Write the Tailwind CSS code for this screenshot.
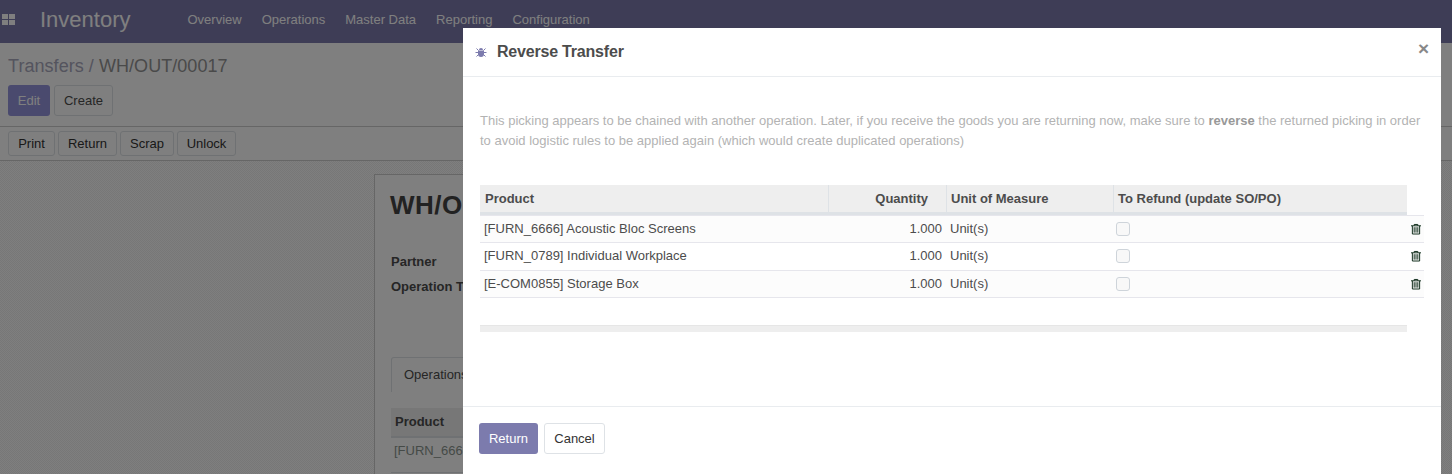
<!DOCTYPE html>
<html lang="en">
<head>
  <meta charset="UTF-8" />
  <title>Transfers | Inventory</title>
  <script src="https://cdn.jsdelivr.net/npm/@tailwindcss/browser@4"></script>
</head>
<body class="relative h-[474px] overflow-hidden bg-white font-['Liberation_Sans',Arial,sans-serif] text-[13px] text-[#4c4c4c]">

  <!-- page behind the dialog -->
  <nav class="flex h-[43px] items-center bg-[#7c7bad] pb-[4px] text-white">
    <svg class="ml-[2px] h-[11px] w-[13px]" viewBox="0 0 13 11" fill="#fff"><rect width="6" height="5"/><rect x="7" width="6" height="5"/><rect y="6" width="6" height="5"/><rect x="7" y="6" width="6" height="5"/></svg>
    <span class="ml-[25px] text-[22px]">Inventory</span>
    <div class="ml-[57px] flex gap-[20px]">
      <a>Overview</a><a>Operations</a><a>Master Data</a><a>Reporting</a><a>Configuration</a>
    </div>
  </nav>

  <div class="h-[84px] border-b border-[#ccc] px-2 pt-[13px]">
    <div class="text-[18px] leading-[20px] tracking-[0.05px] text-[#a8a8bc]">Transfers / <span class="text-[#949494]">WH/OUT/00017</span></div>
    <div class="mt-[9px] flex gap-1">
      <button class="h-[31px] w-[42px] rounded-[3px] bg-[#9494dc] text-white">Edit</button>
      <button class="h-[31px] w-[59px] rounded-[3px] border border-[#dee2e6] bg-white">Create</button>
    </div>
  </div>
  <div class="flex h-[34px] gap-[3px] border-b border-[#ccc] px-2 pt-1 text-[#333]">
    <button class="h-[25px] w-[47px] rounded-[3px] border border-[#dee2e6]">Print</button>
    <button class="h-[25px] w-[59px] rounded-[3px] border border-[#dee2e6]">Return</button>
    <button class="h-[25px] w-[54px] rounded-[3px] border border-[#dee2e6]">Scrap</button>
    <button class="h-[25px] w-[59px] rounded-[3px] border border-[#dee2e6]">Unlock</button>
  </div>

  <div class="h-[313px] overflow-hidden bg-[repeating-conic-gradient(#eeeeee_0_25%,#ffffff_0_50%)] bg-[length:2px_2px] pl-[374px] pt-[13px]">
    <div class="h-[400px] w-[700px] border border-[#ccc] bg-white pl-[16px] pt-[14px]">
      <div class="-ml-[1px] text-[26px] font-bold leading-[32px] tracking-[0.5px] text-[#444]">WH/OUT/00017</div>
      <div class="mt-[28px] font-bold leading-[25px]">
        <div>Partner</div>
        <div>Operation Type</div>
      </div>
      <div class="mt-[58px] flex h-[35px] w-[90px] items-center rounded-t-[3px] border border-b-0 border-[#dee2e6] pl-3">Operations</div>
      <div class="mt-[16px] flex h-[30px] items-center border-b-2 border-[#dee2e6] bg-[#eee] pl-1 font-bold">Product</div>
      <div class="border-b border-[#dee2e6] pb-[11px] pl-[3px] pt-[3px] text-[#8a948e]">[FURN_6666]</div>
      <div class="pl-[3px] pt-[4px] text-[#8a948e]">[FURN_0789]</div>
    </div>
  </div>

  <!-- backdrop -->
  <div class="absolute inset-0 bg-black/50"></div>

  <!-- dialog -->
  <div class="absolute left-[463px] top-[28px] h-[446px] w-[978px] overflow-hidden bg-white">
    <header class="flex h-[49px] items-center border-b border-[#e9ecef] pl-[12px] pr-[12px]">
      <svg class="h-[12px] w-[12px]" viewBox="0 0 12 12" fill="none" stroke="#7c7bad">
        <path d="M1.5 2.5 3.5 4.5M10.5 2.5 8.5 4.5M0.5 6.5H3M11.5 6.5H9M1.5 10.5 3.5 8.5M10.5 10.5 8.5 8.5" stroke-width="1"/>
        <path d="M3 4.5h6v3.5a3 3 0 0 1-6 0z" fill="#7c7bad" stroke="none"/>
        <path d="M4 4a2 2 0 0 1 4 0z" fill="#7c7bad" stroke="none"/>
      </svg>
      <h4 class="ml-[10px] text-[16px] font-bold tracking-[-0.2px] text-[#4c4c4c]">Reverse Transfer</h4>
      <span class="mb-[7px] ml-auto text-[19px] font-bold leading-none text-[#888]">×</span>
    </header>

    <div class="h-[329px] px-[17px] pt-[34px]">
      <p class="leading-[20px] text-[#b3b3b3]">This picking appears to be chained with another operation. Later, if you receive the goods you are returning now, make sure to <b class="text-[#999]">reverse</b> the returned picking in order to avoid logistic rules to be applied again (which would create duplicated operations)</p>

      <div class="mt-[34px] w-[944px]">
        <div class="flex h-[30px] w-[927px] border-b-[3px] border-[#dee2e6] bg-[#eee] font-bold leading-[27px]">
          <div class="w-[349px] border-r border-[#dee2e6] pl-[5px]">Product</div>
          <div class="w-[118px] border-r border-[#dee2e6] pr-[18px] text-right">Quantity</div>
          <div class="w-[167px] border-r border-[#dee2e6] pl-[4px]">Unit of Measure</div>
          <div class="flex-1 pl-[4px]">To Refund (update SO/PO)</div>
        </div>
        <div class="flex h-[28px] items-center border-y border-[#e6e6ec] bg-[#fcfcfc]">
          <div class="w-[349px] pl-[4px]">[FURN_6666] Acoustic Bloc Screens</div>
          <div class="w-[118px] pr-[5px] text-right">1.000</div>
          <div class="w-[167px] pl-[3px]">Unit(s)</div>
          <div class="ml-[2px] h-[14px] w-[14px] rounded-[3px] border border-[#ced4da] bg-[#f8f8f8]"></div>
          <svg class="mb-[1px] ml-[281px] h-[12px] w-[10px]" viewBox="0 0 11 12" fill="none" stroke="#14301f" stroke-width="1.1"><path d="M0 2.5h11M3.5 2.5V1h4v1.5M1.5 2.5v9h8v-9M3.5 4v6M5.5 4v6M7.5 4v6"/></svg>
        </div>
        <div class="flex h-[28px] items-center border-b border-[#e6e6ec] pb-[2px]">
          <div class="w-[349px] pl-[4px]">[FURN_0789] Individual Workplace</div>
          <div class="w-[118px] pr-[5px] text-right">1.000</div>
          <div class="w-[167px] pl-[3px]">Unit(s)</div>
          <div class="ml-[2px] h-[14px] w-[14px] rounded-[3px] border border-[#ced4da] bg-[#f8f8f8]"></div>
          <svg class="ml-[281px] h-[12px] w-[10px]" viewBox="0 0 11 12" fill="none" stroke="#14301f" stroke-width="1.1"><path d="M0 2.5h11M3.5 2.5V1h4v1.5M1.5 2.5v9h8v-9M3.5 4v6M5.5 4v6M7.5 4v6"/></svg>
        </div>
        <div class="flex h-[27px] items-center border-b border-[#e6e6ec] bg-[#fcfcfc]">
          <div class="w-[349px] pl-[4px]">[E-COM0855] Storage Box</div>
          <div class="w-[118px] pr-[5px] text-right">1.000</div>
          <div class="w-[167px] pl-[3px]">Unit(s)</div>
          <div class="ml-[2px] h-[14px] w-[14px] rounded-[3px] border border-[#ced4da] bg-[#f8f8f8]"></div>
          <svg class="mb-[1px] ml-[281px] h-[12px] w-[10px]" viewBox="0 0 11 12" fill="none" stroke="#14301f" stroke-width="1.1"><path d="M0 2.5h11M3.5 2.5V1h4v1.5M1.5 2.5v9h8v-9M3.5 4v6M5.5 4v6M7.5 4v6"/></svg>
        </div>
        <div class="mt-[27px] h-[7px] w-[927px] border-t border-[#e6e6e6] bg-[#eee]"></div>
      </div>
    </div>

    <footer class="flex h-[68px] items-start gap-[6px] border-t border-[#e9ecef] pl-[16px] pt-[16px]">
      <button class="h-[31px] w-[59px] rounded-[3px] bg-[#7c7bad] text-white">Return</button>
      <button class="h-[31px] w-[61px] rounded-[3px] border border-[#dee2e6] bg-white text-[#333]">Cancel</button>
    </footer>
  </div>
</body>
</html>
